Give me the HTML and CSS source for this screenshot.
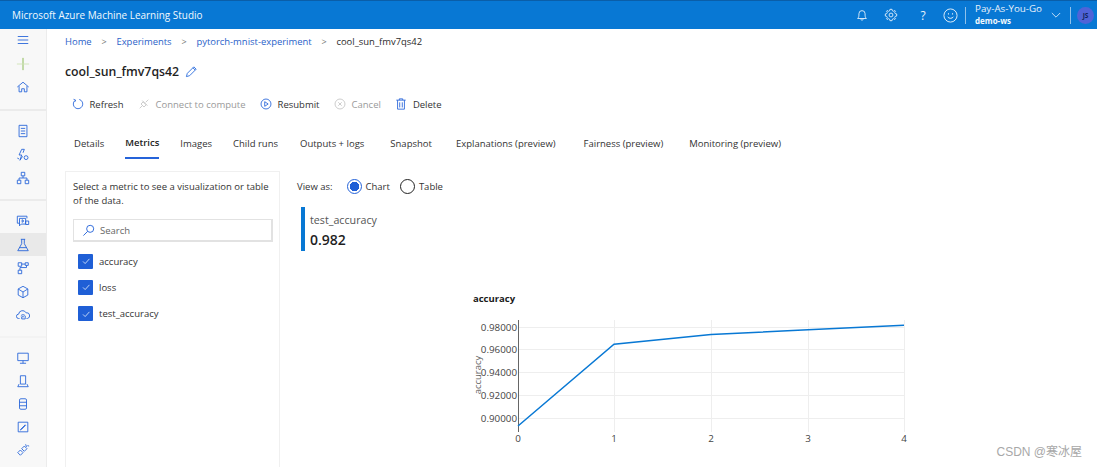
FILE: index.html
```html
<!DOCTYPE html>
<html lang="en">
<head>
<meta charset="utf-8">
<title>Microsoft Azure Machine Learning Studio</title>
<link rel="stylesheet" href="styles.css">
</head>
<body>
<header class="topbar">
  <div class="brand">Microsoft Azure Machine Learning Studio</div>
  <div class="top-actions">
    <svg class="top-icon" viewBox="0 0 16 16"><path d="M3 12c1.500-1.500 1.500-3 1.500-5.500a3.500 3.500 0 0 1 7 0c0 2.500 0 4 1.500 5.500zM6.500 12c0 2.500 3 2.500 3 0"/></svg>
    <svg class="top-icon" viewBox="0 0 16 16"><polygon points="6.800,1.500 9.200,1.500 9.600,3.200 10.900,3.800 12.400,2.900 13.100,3.600 12.200,5.100 12.800,6.400 14.500,6.800 14.500,9.200 12.800,9.600 12.200,10.900 13.100,12.400 12.400,13.100 10.900,12.200 9.600,12.800 9.200,14.500 6.800,14.500 6.400,12.800 5.100,12.200 3.600,13.100 2.900,12.400 3.800,10.900 3.200,9.600 1.500,9.200 1.500,6.800 3.200,6.400 3.800,5.100 2.900,3.600 3.600,2.900 5.100,3.800 6.400,3.200"/><circle cx="8" cy="8" r="2.200"/></svg>
    <span class="help">?</span>
    <svg class="top-icon smile" viewBox="0 0 16 16"><circle cx="8" cy="8" r="7"/><path d="M5 9.500c1.400 2 4.600 2 6 0M5.800 5.500v1.500M10.200 5.500v1.500"/></svg>
    <span class="top-sep"></span>
    <div class="account"><span class="plan">Pay-As-You-Go</span><span class="ws">demo-ws</span></div>
    <svg class="chev" viewBox="0 0 12 8"><path d="M1 1l5 5 5-5"/></svg>
    <span class="top-sep"></span>
    <span class="avatar">JS</span>
  </div>
</header>
<div class="app">
  <nav class="sidebar">
    <div class="nav-group first">
      <svg class="nav-icon" viewBox="0 0 16 16"><path d="M2 4h12M2 8h12M2 12h12"/></svg>
      <svg class="nav-icon plus" viewBox="0 0 16 16"><path d="M8 1v14"/><path class="plus-h" d="M1 8h14"/></svg>
      <svg class="nav-icon" viewBox="0 0 16 16"><path d="M1.500 8L8 2.500 14.500 8M3.500 7v6.500h3V10h3v3.500h3V7"/></svg>
    </div>
    <div class="nav-group">
      <svg class="nav-icon" viewBox="0 0 16 16"><path d="M3.500 1.500h9v13h-9zM5.500 5h5M5.500 8h5M5.500 11h5"/></svg>
      <svg class="nav-icon" viewBox="0 0 16 16"><path d="M6.500 1.500L3.500 8h3L4.500 14l3-4.500M6.500 1.500h3L8 5.500"/><circle cx="11.500" cy="11" r="2.200"/><path d="M1.500 11.500l2 1"/></svg>
      <svg class="nav-icon" viewBox="0 0 16 16"><path d="M6 1.500h4v4H6zM1.500 10.500h4v4h-4zM10.500 10.500h4v4h-4zM8 5.500V8M3.500 10.500V8h9v2.500"/></svg>
    </div>
    <div class="nav-group soft">
      <svg class="nav-icon" viewBox="0 0 16 16"><path d="M4 10.500H1.500v-8h11V5M4 5h7v6.500H6L4 13.500zM7 6.500v3l2-1.500z"/><path d="M11 8h3.500v4H11z"/></svg>
      <div class="nav-active"><svg class="nav-icon" viewBox="0 0 16 16"><path d="M5.500 1.500h5M6.500 1.500v5l-4.500 8h12l-4.500-8v-5M4 11h8"/></svg></div>
      <svg class="nav-icon" viewBox="0 0 16 16"><path d="M2.500 2h4v4h-4zM10.500 2h3.500v3h-3.500zM2.500 10.500h4v4h-4zM6.500 3.500h4M12 5v2.500H4.500v3"/></svg>
      <svg class="nav-icon" viewBox="0 0 16 16"><path d="M8 1.500l5.500 3v7L8 14.500l-5.500-3v-7zM2.500 4.500L8 8l5.500-3.500M8 8v6.500"/></svg>
      <svg class="nav-icon" viewBox="0 0 16 16"><path d="M4 12H3a2.500 2.500 0 0 1 0-5 4.500 4.500 0 0 1 8.500-1.500A3.300 3.300 0 0 1 13 12h-1M5.500 9a3 3 0 0 1 5 0v3.500h-4V10h2.500"/></svg>
    </div>
    <div class="nav-group last">
      <svg class="nav-icon" viewBox="0 0 16 16"><path d="M2 2.500h12v8.500H2zM8 11v3M4.500 14h7"/></svg>
      <svg class="nav-icon" viewBox="0 0 16 16"><path d="M5 2h6v9.500H5zM3.500 11.500L2 14.500h12l-1.500-3"/></svg>
      <svg class="nav-icon" viewBox="0 0 16 16"><rect x="4" y="2" width="8" height="12" rx="1.500"/><path d="M4 6h8M4 10h8"/></svg>
      <svg class="nav-icon" viewBox="0 0 16 16"><path d="M2.500 2.500h11v11h-11zM5.500 10.500l5-5 .5.500-5 5-1 .5z"/></svg>
      <svg class="nav-icon" viewBox="0 0 16 16"><path d="M2 11l3-3 3 3-3 3zM6.500 6.500l3-3 3 3-3 3zM11 1.500l1 3M13 3l2 .5"/></svg>
    </div>
  </nav>
  <main class="content">
    <div class="breadcrumb">
      <a class="crumb">Home</a><span class="crumb-sep">&gt;</span>
      <a class="crumb">Experiments</a><span class="crumb-sep">&gt;</span>
      <a class="crumb">pytorch-mnist-experiment</a><span class="crumb-sep">&gt;</span>
      <span class="crumb-current">cool_sun_fmv7qs42</span>
    </div>
    <div class="title-row">
      <h1 class="title">cool_sun_fmv7qs42</h1>
      <svg class="edit" viewBox="0 0 14 14"><path d="M1.500 12.500l1-3.500 7-7 2.500 2.500-7 7zM8.500 3l2.500 2.500"/></svg>
    </div>
    <div class="toolbar">
      <span class="tool"><svg class="tool-icon" viewBox="0 0 14 14"><path d="M8.500 1.700A5.500 5.500 0 1 1 3.500 2.800M1.800 1.500l2.500 1-1 2"/></svg>Refresh</span>
      <span class="tool off"><svg class="tool-icon" viewBox="0 0 14 14"><path d="M2 12l3-3M12 2L9 5M6 4.500l3.500 3.500L7 10.500 3.500 7zM5 3l6 6"/></svg>Connect to compute</span>
      <span class="tool"><svg class="tool-icon" viewBox="0 0 14 14"><circle cx="7" cy="7" r="5.800"/><path d="M5.500 4.300v5.400L9.500 7z"/></svg>Resubmit</span>
      <span class="tool off"><svg class="tool-icon" viewBox="0 0 14 14"><circle cx="7" cy="7" r="5.800"/><path d="M5 5l4 4M9 5l-4 4"/></svg>Cancel</span>
      <span class="tool"><svg class="tool-icon" viewBox="0 0 14 14"><path d="M1.500 2.500h11M5 2.500V1h4v1.500M3 2.500v10.500h8V2.500M5.500 5v6M8.500 5v6"/></svg>Delete</span>
    </div>
    <div class="tabs">
      <span class="tab">Details</span>
      <span class="tab active">Metrics</span>
      <span class="tab">Images</span>
      <span class="tab">Child runs</span>
      <span class="tab nudge-1">Outputs + logs</span>
      <span class="tab nudge-5">Snapshot</span>
      <span class="tab nudge-3">Explanations (preview)</span>
      <span class="tab nudge-7">Fairness (preview)</span>
      <span class="tab nudge-5">Monitoring (preview)</span>
    </div>
    <div class="panes">
      <section class="metric-pane">
        <p class="hint">Select a metric to see a visualization or table of the data.</p>
        <div class="search">
          <svg class="search-icon" viewBox="0 0 14 14"><circle cx="8.800" cy="5.200" r="3.800"/><path d="M6 8L1.500 12.500"/></svg>
          <span>Search</span>
        </div>
        <div class="check-row"><span class="box"><svg viewBox="0 0 14 14"><path d="M3.500 7.500l2.500 2.500 5-5.500"/></svg></span>accuracy</div>
        <div class="check-row"><span class="box"><svg viewBox="0 0 14 14"><path d="M3.500 7.500l2.500 2.500 5-5.500"/></svg></span>loss</div>
        <div class="check-row"><span class="box"><svg viewBox="0 0 14 14"><path d="M3.500 7.500l2.500 2.500 5-5.500"/></svg></span>test_accuracy</div>
      </section>
      <section class="view-pane">
        <div class="view-as">
          <span class="view-label">View as:</span>
          <span class="radio on"></span><span class="radio-label">Chart</span>
          <span class="radio"></span><span class="radio-label">Table</span>
        </div>
        <div class="stat">
          <div class="stat-name">test_accuracy</div>
          <div class="stat-value">0.982</div>
        </div>
        <svg class="chart" viewBox="0 0 470 187" width="470" height="187">
          <text class="chart-title" x="23" y="22">accuracy</text>
          <g class="grid">
            <path d="M68 47H454M68 69H454M68 92H454M68 115H454M68 138H454"/>
            <path d="M164 40V152M261 40V152M358 40V152M454 40V152"/>
          </g>
          <path class="axis" d="M68 40V152"/>
          <g class="tick-y">
            <text x="67" y="51">0.98000</text>
            <text x="67" y="73">0.96000</text>
            <text x="67" y="96">0.94000</text>
            <text x="67" y="119">0.92000</text>
            <text x="67" y="142">0.90000</text>
          </g>
          <g class="tick-x">
            <text x="68" y="162">0</text>
            <text x="164" y="162">1</text>
            <text x="261" y="162">2</text>
            <text x="358" y="162">3</text>
            <text x="454" y="162">4</text>
          </g>
          <text class="y-title" transform="translate(31 95) rotate(-90)" x="0" y="0">accuracy</text>
          <polyline class="series" points="68,146 164,64.300 261,54.500 358,49.700 454,45.200"/>
        </svg>
      </section>
    </div>
  </main>
</div>
<div class="watermark">CSDN @寒冰屋</div>
</body>
</html>
```
FILE: styles.css
```css
* { box-sizing: border-box; }
html, body { height: 100%; }
body {
  margin: 0;
  height: 467px;
  overflow: hidden;
  background: #fff;
  color: #2b2b2b;
  font-family: "Open Sans", "Noto Sans", sans-serif;
  font-size: 9.5px;
  position: relative;
}
.topbar {
  height: 29px;
  background: #0878d4;
  border-top: 1px solid #0a5ea8;
  color: #fff;
  display: flex;
  align-items: center;
  justify-content: space-between;
  padding: 0 3px 0 12px;
}
.brand { font-size: 9.95px; color: #f2f8fd; }
.top-actions { display: flex; align-items: center; }
.top-icon { width: 14px; height: 14px; fill: none; stroke: #e8f2fb; stroke-width: 1; margin-right: 15px; }
.top-icon.smile { margin-left: 16px; width: 15px; height: 15px; margin-right: 7px; }
.help { font-size: 12px; color: #e8f2fb; width: 8px; text-align: center; margin-left: 6px; }
.top-sep { width: 1px; height: 17px; background: #8fc1ea; }
.account { display: flex; flex-direction: column; margin-left: 9px; line-height: 12px; width: 76px; }
.plan { font-size: 9.8px; color: #e8f2fb; }
.ws { font-size: 8px; font-weight: 700; color: #f2f8fd; }
.chev { width: 10px; height: 7px; fill: none; stroke: #e8f2fb; stroke-width: 1; margin-right: 9px; }
.avatar {
  width: 17px; height: 17px; border-radius: 50%; margin-left: 6px;
  background: #4f63d8; color: #10245a; font-size: 6.5px; font-weight: 700;
  display: flex; align-items: center; justify-content: center;
}
.app { display: flex; height: 438px; }
.sidebar {
  width: 47px;
  flex: none;
  background: #f8f8f8;
  border-right: 1px solid #ececec;
  display: flex;
  flex-direction: column;
}
.nav-group {
  display: flex;
  flex: none;
  flex-direction: column;
  align-items: center;
  gap: 9.5px;
  padding: 13px 0 14px;
  border-bottom: 2px solid #ebebeb;
}
.nav-group.first { padding: 4px 0 0; height: 82px; }
.nav-group.soft { border-bottom-color: #f3f3f3; }
.nav-group.last { border-bottom: 0; padding: 13px 0 0; gap: 9px; }
.nav-icon { width: 14px; height: 14px; fill: none; stroke: #2563d9; stroke-width: 1; display: block; flex: none; }
.nav-icon.plus { stroke: #7fb342; }
.plus-h { stroke: #cfe3b5; }
.nav-active {
  align-self: stretch; height: 23px; margin: -4.5px 0; background: #e9e9e9;
  display: flex; align-items: center; justify-content: center;
}
.content { flex: 1; min-width: 0; padding-left: 18px; }
.breadcrumb { display: flex; align-items: center; height: 24px; font-size: 9.45px; }
.crumb { color: #2a62c9; }
.crumb-sep { color: #777; margin: 0 9.8px; font-size: 9px; }
.crumb-current { color: #2b2b2b; }
.title-row { display: flex; align-items: center; height: 36px; }
.title { margin: 0; font-size: 12.3px; font-weight: 600; color: #1f1f1f; }
.edit { width: 13px; height: 13px; margin-left: 6px; fill: none; stroke: #2f6fde; stroke-width: 1; }
.toolbar { display: flex; align-items: center; height: 30px; padding-left: 7px; }
.tool { display: flex; align-items: center; margin-right: 14.5px; color: #333; font-size: 9.5px; }
.tool.off { color: #9a9a9a; }
.tool-icon { width: 12px; height: 12px; margin-right: 5.5px; fill: none; stroke: #2563d9; stroke-width: 1; }
.tool.off .tool-icon { stroke: #c4c4c4; }
.tabs { display: flex; height: 31px; margin-top: 9px; padding-left: 9px; gap: 21px; font-size: 9.5px; }
.tab { display: flex; align-items: center; height: 31px; padding-bottom: 1px; color: #333; }
.tab.active { font-weight: 600; color: #222; border-bottom: 2px solid #2563d9; }
.tab.nudge-1 { margin-left: 1px; }
.tab.nudge-3 { margin-left: 3px; }
.tab.nudge-5 { margin-left: 5px; }
.tab.nudge-7 { margin-left: 7px; }
.panes { display: flex; margin-top: 12px; }
.metric-pane {
  width: 215px;
  height: 300px;
  flex: none;
  border: 1px solid #f0f0f0;
  padding: 8px 7px;
}
.hint { margin: 0 0 11px; line-height: 14px; font-size: 9.5px; color: #333; }
.search {
  height: 23px; width: 200px; border: 1px solid #e2e2e2; border-bottom-width: 2px; border-right-width: 2px;
  display: flex; align-items: center; padding-left: 8px; color: #666; margin-bottom: 6px;
}
.search-icon { width: 13px; height: 13px; margin-right: 5px; fill: none; stroke: #2563d9; stroke-width: 1; }
.check-row { display: flex; align-items: center; height: 26.3px; padding-left: 5px; color: #333; }
.box {
  width: 15px; height: 15px; border-radius: 1px; background: #1f5fd6; margin-right: 6px;
  display: flex; align-items: center; justify-content: center;
}
.box svg { width: 12px; height: 12px; fill: none; stroke: #d8e6fb; stroke-width: 1; }
.view-pane { flex: 1; min-width: 0; padding: 6px 0 0 17px; }
.view-as { display: flex; align-items: center; height: 18px; color: #333; }
.view-label { margin-right: 14px; }
.radio {
  width: 15px; height: 15px; border-radius: 50%; border: 1px solid #222; margin-right: 4px; flex: none; background: #fff;
}
.radio.on { border-color: #2563d9; background: radial-gradient(circle, #1f5fd6 0 4.5px, #fff 5px); }
.radio-label { margin-right: 10px; }
.stat { margin: 12px 0 0 4px; height: 44px; border-left: 4px solid #0878d4; padding: 5px 0 0 5px; }
.stat-name { font-size: 10.7px; line-height: 17px; color: #555; }
.stat-value { font-size: 14px; line-height: 22px; font-weight: 600; color: #1f1f1f; }
.chart { display: block; margin: 29px 0 0 153px; font-family: "Open Sans", sans-serif; }
.chart-title { font-size: 9.5px; font-weight: 700; fill: #1a1a1a; }
.grid path { fill: none; stroke: #eeeeee; stroke-width: 1; shape-rendering: crispEdges; }
.axis { fill: none; stroke: #666; stroke-width: 1; shape-rendering: crispEdges; }
.tick-y text { text-anchor: end; font-size: 9.8px; fill: #444; }
.tick-x text { text-anchor: middle; font-size: 9.8px; fill: #444; }
.y-title { text-anchor: middle; font-size: 9.5px; fill: #666; }
.series { fill: none; stroke: #0878d4; stroke-width: 1.5; }
.watermark {
  position: absolute; right: 15px; bottom: 8px;
  font-family: "Liberation Sans", "Noto Sans CJK SC", sans-serif; font-size: 12px; color: #a8a8a8;
}
```
